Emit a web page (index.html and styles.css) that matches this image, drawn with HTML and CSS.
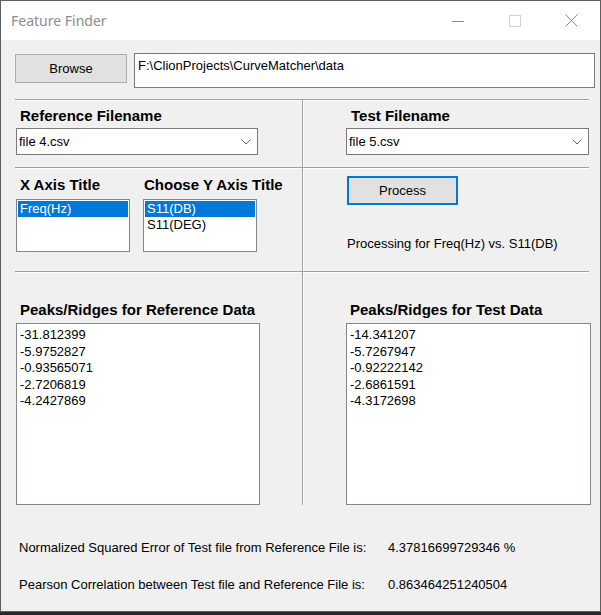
FILE: index.html
```html
<!DOCTYPE html>
<html>
<head>
<meta charset="utf-8">
<title>Feature Finder</title>
<link rel="stylesheet" href="styles.css">
</head>
<body>
<div class="window">
  <div class="titlebar">
    <div class="title">Feature Finder</div>
    <div class="caption-btn">
      <svg width="12" height="12" viewBox="0 0 12 12"><line x1="0" y1="6.5" x2="12" y2="6.5" stroke="#8a8a8a" stroke-width="1"/></svg>
    </div>
    <div class="caption-btn">
      <svg width="12" height="12" viewBox="0 0 12 12"><rect x="0.5" y="0.5" width="11" height="11" fill="none" stroke="#d2d2d2" stroke-width="1"/></svg>
    </div>
    <div class="caption-btn">
      <svg width="13" height="13" viewBox="0 0 13 13"><path d="M0.5 0.5 L12.5 12.5 M12.5 0.5 L0.5 12.5" stroke="#8a8a8a" stroke-width="1" fill="none"/></svg>
    </div>
  </div>
  <div class="client">
    <div class="browse-row">
      <div class="btn browse">Browse</div>
      <div class="textbox">F:\ClionProjects\CurveMatcher\data</div>
    </div>
    <div class="panels">
      <div class="cell left">
        <div class="heading ref-head">Reference Filename</div>
        <div class="combo ref-combo"><span>file 4.csv</span>
          <svg class="chev" width="10" height="6" viewBox="0 0 10 6"><polyline points="0.5,0.5 5,5 9.5,0.5" fill="none" stroke="#606060" stroke-width="1"/></svg>
        </div>
      </div>
      <div class="cell right">
        <div class="heading test-head">Test Filename</div>
        <div class="combo test-combo"><span>file 5.csv</span>
          <svg class="chev" width="10" height="6" viewBox="0 0 10 6"><polyline points="0.5,0.5 5,5 9.5,0.5" fill="none" stroke="#606060" stroke-width="1"/></svg>
        </div>
      </div>
      <div class="cell left axes">
        <div class="axis-group x-group">
          <div class="heading">X Axis Title</div>
          <div class="listbox small">
            <div class="item sel">Freq(Hz)</div>
          </div>
        </div>
        <div class="axis-group y-group">
          <div class="heading">Choose Y Axis Title</div>
          <div class="listbox small">
            <div class="item sel">S11(DB)</div>
            <div class="item">S11(DEG)</div>
          </div>
        </div>
      </div>
      <div class="cell right process">
        <div class="btn process-btn">Process</div>
        <div class="status">Processing for Freq(Hz) vs. S11(DB)</div>
      </div>
      <div class="cell left peaks ref-peaks">
        <div class="heading">Peaks/Ridges for Reference Data</div>
        <div class="listbox big">
          <div class="item">-31.812399</div>
          <div class="item">-5.9752827</div>
          <div class="item">-0.93565071</div>
          <div class="item">-2.7206819</div>
          <div class="item">-4.2427869</div>
        </div>
      </div>
      <div class="cell right peaks test-peaks">
        <div class="heading">Peaks/Ridges for Test Data</div>
        <div class="listbox big">
          <div class="item">-14.341207</div>
          <div class="item">-5.7267947</div>
          <div class="item">-0.92222142</div>
          <div class="item">-2.6861591</div>
          <div class="item">-4.3172698</div>
        </div>
      </div>
    </div>
    <div class="results">
      <div>Normalized Squared Error of Test file from Reference File is:</div>
      <div>4.37816699729346 %</div>
      <div>Pearson Correlation between Test file and Reference File is:</div>
      <div>0.863464251240504</div>
    </div>
  </div>
</div>
</body>
</html>
```
FILE: styles.css
```css
* { box-sizing: border-box; }

html, body {
  margin: 0;
  padding: 0;
}

body {
  width: 601px;
  height: 615px;
  overflow: hidden;
  background: #2a2530;
  font-family: "Liberation Sans", Arial, sans-serif;
  font-size: 13px;
  color: #000;
}

.window {
  width: 601px;
  height: 612px;
  border: 1px solid #5e5e5e;
  background: #f0f0f0;
  display: flex;
  flex-direction: column;
}

.titlebar {
  height: 39px;
  background: #fff;
  display: flex;
  align-items: center;
  flex-shrink: 0;
}

.title {
  flex: 1;
  padding-left: 10px;
  font-family: "Noto Sans", "Open Sans", sans-serif;
  font-size: 14px;
  color: #8c8c8c;
}

.caption-btn {
  width: 57px;
  height: 39px;
  display: flex;
  align-items: center;
  justify-content: center;
}

.client {
  flex: 1;
  padding: 13px 0 0 14px;
}

.browse-row {
  display: flex;
  align-items: flex-start;
  gap: 7px;
}

.btn {
  background: #e1e1e1;
  border: 1px solid #adadad;
  display: flex;
  align-items: center;
  justify-content: center;
  white-space: nowrap;
}

.browse {
  width: 112px;
  height: 29px;
  margin-top: 1px;
}

.textbox {
  width: 461px;
  height: 35px;
  background: #fff;
  border: 1px solid #7a7a7a;
  padding: 4px 3px;
  line-height: 16px;
}

.panels {
  margin-top: 11px;
  display: grid;
  grid-template-columns: 288px 286px;
  grid-template-rows: 68px 104px 234px;
}

.cell {
  border-top: 1px solid #a0a0a0;
  box-shadow: inset 0 1px 0 #fff;
}

.cell.left {
  border-right: 1px solid #a0a0a0;
}

.cell.right {
  box-shadow: inset 0 1px 0 #fff, inset 1px 0 0 #fff;
}

.heading {
  font-weight: bold;
  font-size: 15px;
  line-height: 18px;
  white-space: nowrap;
}

.ref-head {
  margin: 7px 0 0 5px;
}

.test-head {
  margin: 7px 0 0 48px;
}

.combo {
  height: 27px;
  margin-top: 3px;
  background: #fff;
  border: 1px solid #7a7a7a;
  display: flex;
  align-items: center;
  justify-content: space-between;
  padding: 0 6px 0 2px;
}

.ref-combo {
  margin-left: 1px;
  width: 242px;
}

.test-combo {
  margin-left: 43px;
  width: 243px;
}

.axes {
  display: flex;
  gap: 13px;
  padding: 8px 0 0 1px;
}

.axis-group {
  width: 114px;
}

.x-group .heading {
  padding-left: 4px;
}

.y-group .heading {
  padding-left: 1px;
}

.listbox {
  background: #fff;
  border: 1px solid #828790;
  padding: 1px;
  line-height: 16px;
}

.listbox.small {
  margin-top: 5px;
  height: 53px;
}

.item {
  height: 16px;
  padding-left: 2px;
  white-space: nowrap;
}

.item.sel {
  background: #0078d7;
  color: #fff;
}

.process {
  padding: 8px 0 0 44px;
}

.process-btn {
  width: 111px;
  height: 29px;
  border: 2px solid #0078d7;
}

.status {
  margin-top: 31px;
  line-height: 16px;
}

.peaks .heading {
  margin-top: 29px;
}

.ref-peaks .heading {
  padding-left: 5px;
}

.test-peaks .heading {
  padding-left: 47px;
}

.listbox.big {
  margin-top: 4px;
  height: 182px;
  padding: 3px 1px;
}

.listbox.big .item {
  padding-left: 2px;
  height: 16.5px;
  line-height: 16.5px;
}

.ref-peaks .listbox {
  margin-left: 1px;
  width: 244px;
}

.test-peaks .listbox {
  margin-left: 43px;
  width: 245px;
}

.results {
  margin: 35px 0 0 4px;
  display: grid;
  grid-template-columns: 369px auto;
  row-gap: 21px;
  line-height: 16px;
  white-space: nowrap;
}
```
